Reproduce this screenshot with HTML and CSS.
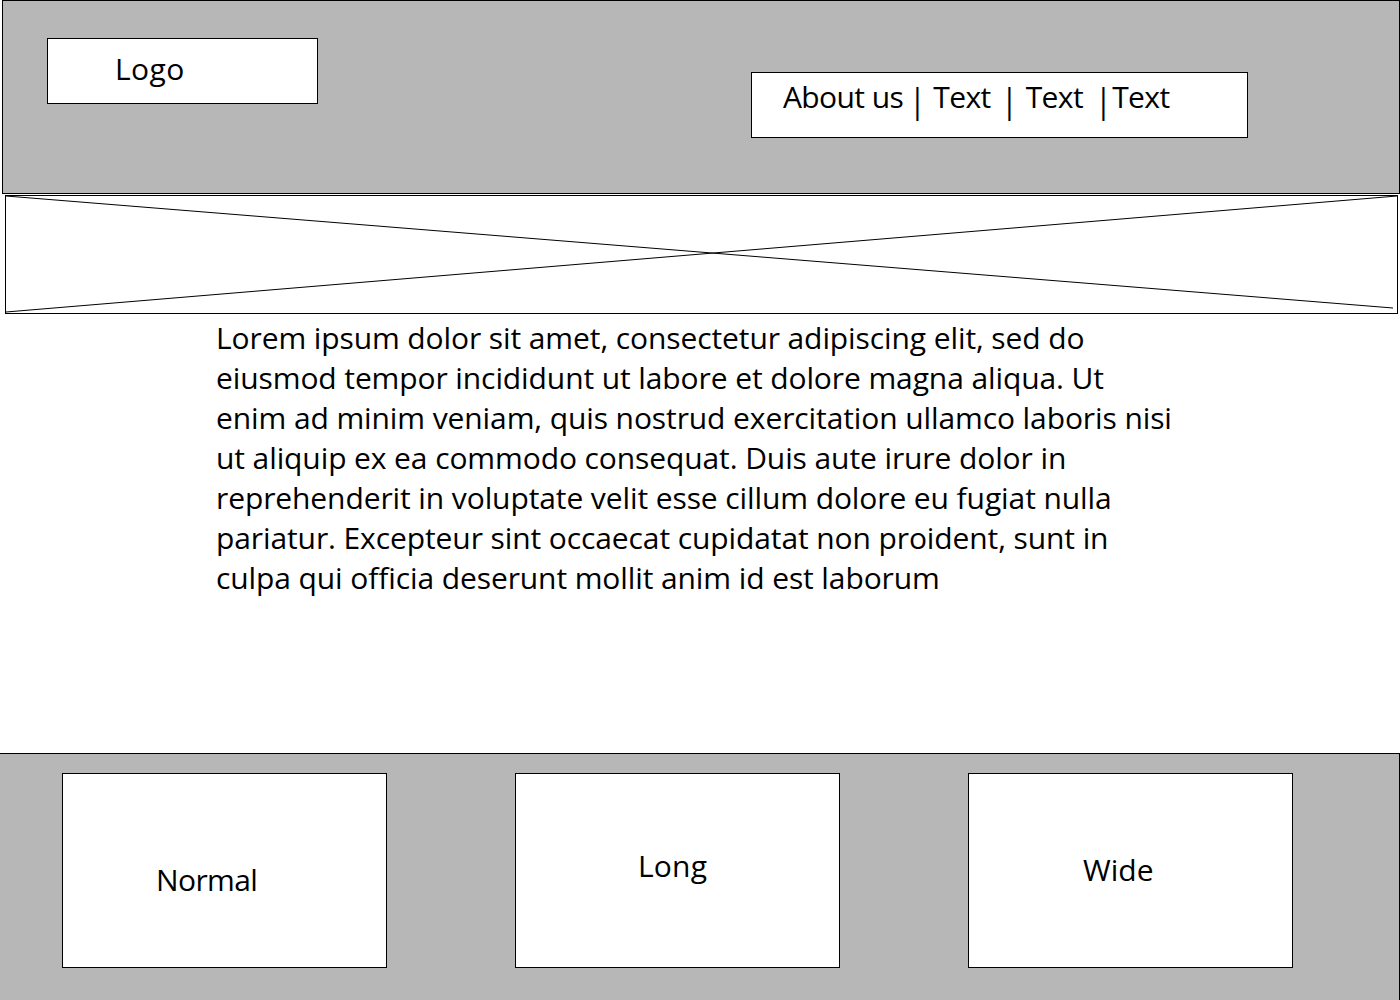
FILE: index.html
```html
<!DOCTYPE html>
<html lang="en">
<head>
<meta charset="utf-8">
<title>Wireframe</title>
<link rel="stylesheet" href="styles.css">
</head>
<body>
<header class="top">
  <div class="logo"><span class="logo-text">Logo</span></div>
  <nav class="nav">
    <span class="nav-item">About us</span><span class="sep sep-1">|</span><span class="nav-item">Text</span><span class="sep sep-2">|</span><span class="nav-item">Text</span><span class="sep sep-3">|</span><span class="nav-item">Text</span>
  </nav>
</header>
<section class="hero">
  <svg class="hero-x" viewBox="0 0 1391 117" preserveAspectRatio="none" aria-hidden="true">
    <line x1="0" y1="0" x2="1387" y2="112" stroke="#000" stroke-width="1" vector-effect="non-scaling-stroke"/>
    <line x1="0" y1="116" x2="1391" y2="0" stroke="#000" stroke-width="1" vector-effect="non-scaling-stroke"/>
  </svg>
</section>
<main class="content">
  <p class="lorem">Lorem ipsum dolor sit amet, consectetur adipiscing elit, sed do<br>eiusmod tempor incididunt ut labore et dolore magna aliqua. Ut<br>enim ad minim veniam, quis nostrud exercitation ullamco laboris nisi<br>ut aliquip ex ea commodo consequat. Duis aute irure dolor in<br>reprehenderit in voluptate velit esse cillum dolore eu fugiat nulla<br>pariatur. Excepteur sint occaecat cupidatat non proident, sunt in<br>culpa qui officia deserunt mollit anim id est laborum</p>
</main>
<footer class="bottom">
  <div class="card card-normal">Normal</div>
  <div class="card card-long">Long</div>
  <div class="card card-wide">Wide</div>
</footer>
</body>
</html>
```

FILE: styles.css
```css
html, body {
  margin: 0;
  padding: 0;
  background: #ffffff;
}
body {
  width: 1400px;
  height: 1000px;
  overflow: hidden;
  font-family: "Open Sans", "Liberation Sans", sans-serif;
  color: #000;
  display: flex;
  flex-direction: column;
}
.top {
  box-sizing: border-box;
  margin-left: 2px;
  width: 1398px;
  height: 194px;
  background: #b7b7b7;
  border: 1px solid #000;
  display: flex;
  align-items: flex-start;
  padding: 37px 0 0 44px;
  flex-shrink: 0;
}
.logo {
  box-sizing: border-box;
  width: 271px;
  height: 66px;
  background: #fff;
  border: 1px solid #000;
  padding: 9px 0 0 67px;
  font-size: 30px;
  line-height: 42px;
  letter-spacing: 0.4px;
}
.nav {
  box-sizing: border-box;
  margin: 34px 0 0 433px;
  width: 497px;
  height: 66px;
  background: #fff;
  border: 1px solid #000;
  padding: 3px 0 0 31px;
  font-size: 30px;
  line-height: 42px;
  letter-spacing: -0.6px;
  white-space: nowrap;
}
.sep {
  display: inline-block;
  font-size: 34px;
  line-height: 42px;
  vertical-align: top;
  transform: translateY(3px) scaleX(0.9);
}
.sep-1 { margin: 0 7px 0 5px; }
.sep-2 { margin: 0 8px 0 9px; }
.sep-3 { margin: 0 0 0 11px; }
.hero {
  box-sizing: border-box;
  margin: 1px 0 0 5px;
  width: 1393px;
  height: 119px;
  border: 1px solid #000;
  background: #fff;
  flex-shrink: 0;
}
.hero-x {
  display: block;
  width: 100%;
  height: 100%;
}
.content {
  flex: 1;
  padding: 4px 0 0 216px;
}
.lorem {
  margin: 0;
  font-size: 30px;
  line-height: 40px;
  letter-spacing: -0.1px;
  white-space: nowrap;
}
.bottom {
  box-sizing: border-box;
  height: 247px;
  background: #b7b7b7;
  border-top: 1px solid #000;
  border-right: 1px solid #000;
  display: flex;
  align-items: flex-start;
  gap: 128px;
  padding: 19px 0 0 62px;
  flex-shrink: 0;
}
.card {
  box-sizing: border-box;
  width: 325px;
  height: 195px;
  background: #fff;
  border: 1px solid #000;
  font-size: 30px;
  line-height: 36px;
  letter-spacing: -0.6px;
}
.card-normal { padding: 88px 0 0 93px; }
.card-long { padding: 74px 0 0 122px; letter-spacing: 0.2px; }
.card-wide { padding: 78px 0 0 114px; letter-spacing: 0px; }
```
